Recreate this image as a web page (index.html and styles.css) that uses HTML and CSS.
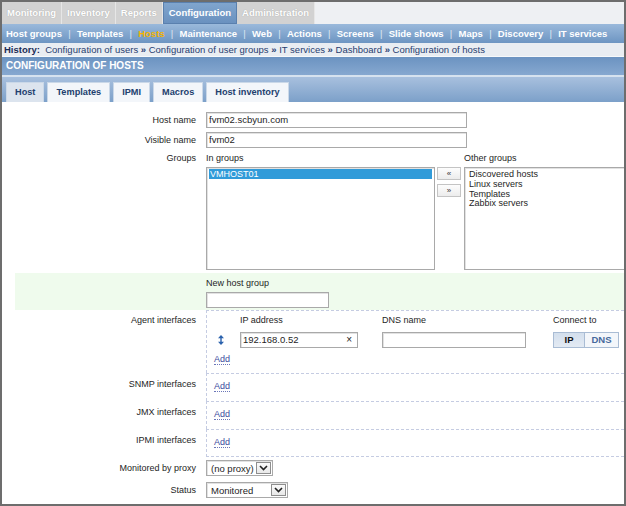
FILE: index.html
```html
<!DOCTYPE html>
<html>
<head>
<meta charset="utf-8">
<title>Configuration of hosts</title>
<link rel="stylesheet" href="styles.css">
</head>
<body>
<div class="frame">
  <div class="topmenu">
    <span class="mtab">Monitoring</span><span class="mtab">Inventory</span><span class="mtab">Reports</span><span class="mtab active">Configuration</span><span class="mtab">Administration</span>
  </div>
  <div class="submenu">
    <span>Host groups</span><span class="sep">|</span><span>Templates</span><span class="sep">|</span><span class="cur">Hosts</span><span class="sep">|</span><span>Maintenance</span><span class="sep">|</span><span>Web</span><span class="sep">|</span><span>Actions</span><span class="sep">|</span><span>Screens</span><span class="sep">|</span><span>Slide shows</span><span class="sep">|</span><span>Maps</span><span class="sep">|</span><span>Discovery</span><span class="sep">|</span><span>IT services</span>
  </div>
  <div class="history"><b>History:</b>&nbsp; <span class="hl">Configuration of users</span> <b class="rq">»</b> <span class="hl">Configuration of user groups</span> <b class="rq">»</b> <span class="hl">IT services</span> <b class="rq">»</b> <span class="hl">Dashboard</span> <b class="rq">»</b> <span class="hl">Configuration of hosts</span></div>
  <div class="title">CONFIGURATION OF HOSTS</div>
  <div class="stripe"></div>
  <div class="tabbar">
    <span class="tab tab-on">Host</span><span class="tab">Templates</span><span class="tab">IPMI</span><span class="tab">Macros</span><span class="tab">Host inventory</span>
  </div>

  <div class="form">
    <div class="row">
      <div class="lbl">Host name</div>
      <div class="val"><div class="txt w261">fvm02.scbyun.com</div></div>
    </div>
    <div class="row">
      <div class="lbl">Visible name</div>
      <div class="val"><div class="txt w261">fvm02</div></div>
    </div>
    <div class="row groups">
      <div class="lbl glbl">Groups</div>
      <div class="val">
        <div class="gcol">
          <div class="ghead">In groups</div>
          <div class="listbox lb-in"><div class="opt selopt">VMHOST01</div></div>
        </div>
        <div class="movebtns">
          <span class="mbtn">«</span>
          <span class="mbtn">»</span>
        </div>
        <div class="gcol">
          <div class="ghead">Other groups</div>
          <div class="listbox lb-out">
            <div class="opt">Discovered hosts</div>
            <div class="opt">Linux servers</div>
            <div class="opt">Templates</div>
            <div class="opt">Zabbix servers</div>
          </div>
        </div>
      </div>
    </div>
    <div class="row newgrp">
      <div class="lbl"></div>
      <div class="val col">
        <div class="ghead">New host group</div>
        <div class="txt w123"></div>
      </div>
    </div>

    <div class="irow agent">
      <div class="lbl ilbl">Agent interfaces</div>
      <div class="icell">
        <div class="ihead"><span class="c-ip">IP address</span><span class="c-dns">DNS name</span><span class="c-con">Connect to</span></div>
        <div class="idata">
          <span class="drag"><svg width="6" height="10" viewBox="0 0 6 10"><polygon points="3,0 6,3.2 0,3.2" fill="#2b62ad"/><rect x="2.3" y="3" width="1.4" height="4" fill="#2b62ad"/><polygon points="0,6.8 6,6.8 3,10" fill="#2b62ad"/></svg></span>
          <div class="txt ip"><span>192.168.0.52</span><span class="clr">×</span></div>
          <div class="txt dns"></div>
          <div class="btns"><span class="b on">IP</span><span class="b">DNS</span></div>
        </div>
        <div class="addline"><span class="add">Add</span></div>
      </div>
    </div>
    <div class="irow">
      <div class="lbl ilbl2">SNMP interfaces</div>
      <div class="icell short"><span class="add">Add</span></div>
    </div>
    <div class="irow">
      <div class="lbl ilbl2">JMX interfaces</div>
      <div class="icell short"><span class="add">Add</span></div>
    </div>
    <div class="irow last">
      <div class="lbl ilbl2">IPMI interfaces</div>
      <div class="icell short"><span class="add">Add</span></div>
    </div>

    <div class="row prow">
      <div class="lbl">Monitored by proxy</div>
      <div class="val"><div class="dd w67"><span>(no proxy)</span><span class="arr"><svg width="9" height="6" viewBox="0 0 9 6"><polyline points="1,1 4.5,4.5 8,1" fill="none" stroke="#222" stroke-width="1.6"/></svg></span></div></div>
    </div>
    <div class="row srow">
      <div class="lbl">Status</div>
      <div class="val"><div class="dd w82"><span>Monitored</span><span class="arr"><svg width="9" height="6" viewBox="0 0 9 6"><polyline points="1,1 4.5,4.5 8,1" fill="none" stroke="#222" stroke-width="1.6"/></svg></span></div></div>
    </div>
  </div>
</div>
</body>
</html>
```
FILE: styles.css
```css
* { box-sizing: border-box; }
body {
  margin: 0;
  font-family: "Liberation Sans", Arial, sans-serif;
  font-size: 9px;
  color: #1e1e1e;
  background: #fff;
}
.frame {
  width: 626px;
  height: 506px;
  border: 2px solid #6d6d6d;
  overflow: hidden;
  background: #fff;
}
.topmenu {
  display: flex;
  height: 22px;
  background: #eef0f3;
}
.mtab {
  padding: 0 5px;
  line-height: 22px;
  font-size: 9.5px;
  font-weight: bold;
  color: #fff;
  background: #d2d2d2;
  border-right: 1px solid #e6e6e6;
  text-shadow: 0 0 1px #9d9d9d;
  white-space: nowrap;
}
.mtab.active {
  background: linear-gradient(#80a5ce, #6a91bf);
  border: 1px solid #5a80ae;
  line-height: 20px;
  text-shadow: none;
}
.submenu {
  height: 19px;
  display: flex;
  align-items: center;
  padding-left: 4px;
  background: linear-gradient(#9ab9db, #6d95c2);
  font-size: 9.5px;
  font-weight: bold;
  color: #fff;
  white-space: nowrap;
}
.submenu .cur { color: #f6b400; }
.sep { margin: 0 6.25px; color: #dde7f2; font-weight: normal; }
.history {
  height: 14px;
  line-height: 13px;
  padding-left: 2px;
  background: #e9edf2;
  color: #283d70;
  font-size: 9.5px;
  white-space: nowrap;
  border-bottom: 1px solid #f7f9fb;
}
.history b { color: #1a2c56; }
.history .rq { color: #283d70; }
.title {
  height: 18px;
  line-height: 18px;
  padding-left: 4px;
  background: linear-gradient(#6b93c1, #86a8d0);
  color: #fff;
  font-weight: bold;
  font-size: 10px;
  white-space: nowrap;
}
.stripe { height: 2px; background: #d6e2ef; }
.tabbar {
  height: 25px;
  display: flex;
  align-items: flex-end;
  gap: 3px;
  padding-left: 4px;
  background: linear-gradient(#a8c0de, #7ca0c9);
}
.tab {
  height: 20px;
  line-height: 19px;
  padding: 0 8px;
  border: 1px solid #cad8e8;
  border-bottom: none;
  background: #f3f6fa;
  color: #22406e;
  font-weight: bold;
  font-size: 9.2px;
  white-space: nowrap;
}
.tab.tab-on { background: #dce4ee; }

.form { padding: 8px 0 0 13px; }
.row { display: flex; align-items: center; height: 20px; }
.lbl {
  flex: 0 0 191px;
  padding-right: 10px;
  text-align: right;
  white-space: nowrap;
}
.val { display: flex; flex-shrink: 0; }
.val.col { flex-direction: column; }
.txt {
  height: 16px;
  border: 1px solid #a9a9a9;
  box-shadow: inset 1px 1px 0 #e2e2e2;
  background: #fff;
  padding: 0 2px;
  font-size: 9.5px;
  line-height: 14px;
  white-space: nowrap;
  flex-shrink: 0;
}
.w261 { width: 261px; }
.w123 { width: 123px; }

.row.groups { height: auto; align-items: flex-start; padding: 2px 0 3px; }
.glbl { line-height: 13px; }
.gcol { display: flex; flex-direction: column; flex-shrink: 0; }
.ghead { line-height: 13px; height: 15px; white-space: nowrap; }
.listbox {
  height: 103px;
  border: 1px solid #a9a9a9;
  box-shadow: inset 1px 1px 0 #e2e2e2;
  padding: 1px 2px;
  background: #fff;
}
.lb-in { width: 229px; }
.lb-out { width: 200px; padding-left: 3px; padding-top: 2px; }
.opt { line-height: 9.8px; padding: 0 1px; white-space: nowrap; }
.opt.selopt { background: #319bd9; color: #fff; line-height: 10px; }
.movebtns {
  display: flex;
  flex-direction: column;
  gap: 4px;
  margin: 15px 3px 0 2px;
}
.mbtn {
  width: 24px;
  height: 13px;
  border: 1px solid #c4c4c4;
  background: linear-gradient(#fdfdfd, #ececec);
  font-size: 8px;
  line-height: 11px;
  text-align: center;
  color: #333;
}
.row.newgrp {
  height: auto;
  align-items: flex-start;
  background: #effbed;
  padding: 4px 0 2px;
}

.irow { display: flex; }
.icell {
  flex: 1;
  border-left: 1px dashed #c5cce2;
  border-top: 1px dashed #c5cce2;
  padding: 3px 0 8px 7px;
}
.icell.short { padding-top: 6px; padding-bottom: 9px; line-height: 12px; }
.irow.last .icell { border-bottom: 1px dashed #c5cce2; padding-bottom: 8px; }
.ilbl { padding-top: 4px; line-height: 12px; }
.ilbl2 { padding-top: 5px; line-height: 12px; }
.ihead { display: flex; line-height: 12px; white-space: nowrap; }
.c-ip { margin-left: 26px; width: 142px; }
.c-dns { width: 171px; }
.idata { display: flex; align-items: center; height: 17px; margin-top: 5px; }
.drag { width: 26px; padding-left: 4px; display: flex; align-items: center; }
.txt.ip { width: 118px; display: flex; justify-content: space-between; padding-right: 5px; }
.clr { font-size: 10px; color: #222; }
.txt.dns { width: 144px; margin-left: 24px; }
.btns { display: flex; margin-left: 27px; height: 17px; margin-top: 1px; }
.b {
  height: 16px;
  line-height: 14px;
  border: 1px solid #a9bcd4;
  font-weight: bold;
  font-size: 9.5px;
  text-align: center;
  color: #46699c;
  background: #f3f6fa;
}
.b.on {
  width: 32px;
  color: #111;
  background: linear-gradient(#d3dfed, #e3eaf3);
}
.b:not(.on) { width: 34px; border-left: none; }
.addline { margin-top: 5px; line-height: 12px; }
.add {
  color: #3d4c9e;
  border-bottom: 1px dotted #6b76b8;
}

.prow { margin-top: 3px; height: 16px; }
.srow { margin-top: 6px; height: 16px; }
.dd {
  height: 16px;
  border: 1px solid #a9a9a9;
  box-shadow: inset 1px 1px 0 #e2e2e2;
  display: flex;
  align-items: center;
  justify-content: space-between;
  padding: 0 1px 0 4px;
  font-size: 9.5px;
  white-space: nowrap;
  background: #fff;
}
.w67 { width: 67px; }
.w82 { width: 82px; }
.arr {
  width: 15px;
  height: 12px;
  border: 1px solid #8e8e8e;
  background: linear-gradient(#fafafa, #e8e8e8);
  display: flex;
  align-items: center;
  justify-content: center;
}
```
